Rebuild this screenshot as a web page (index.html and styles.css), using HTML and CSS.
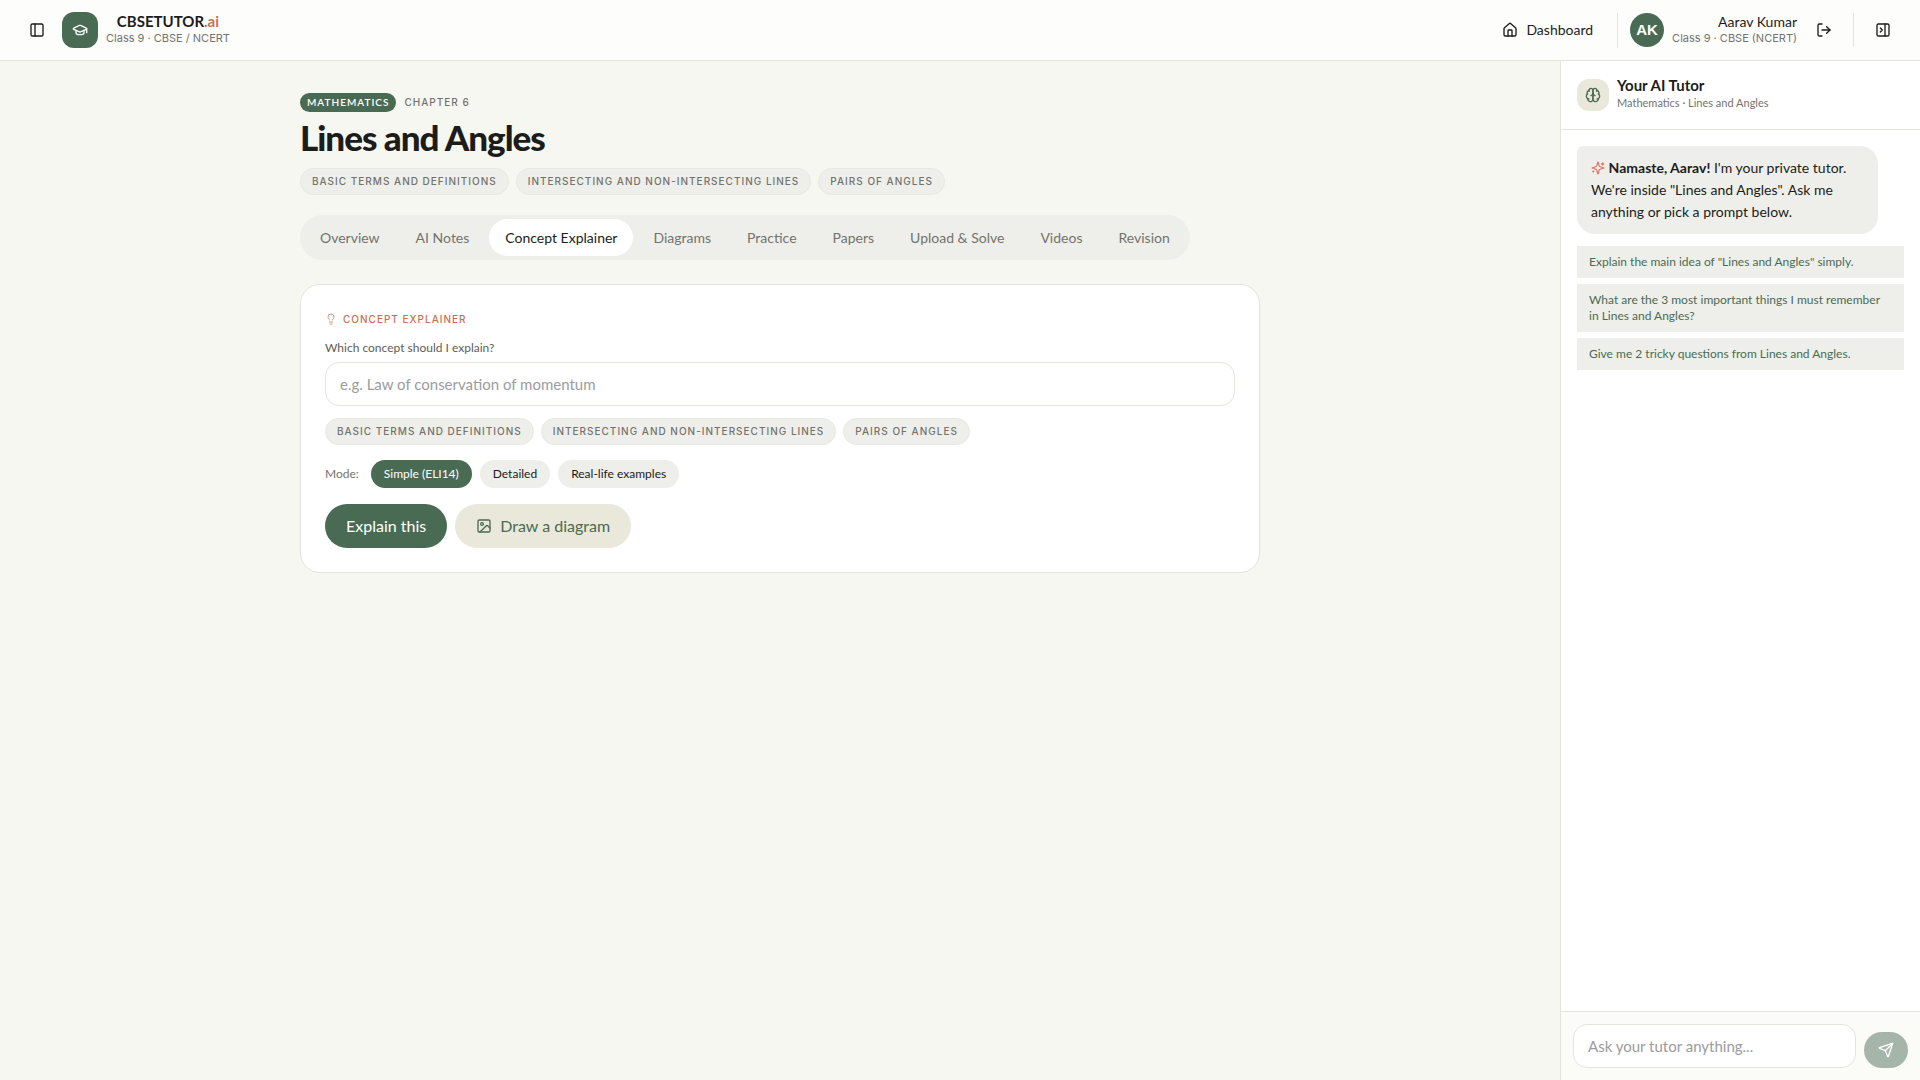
FILE: index.html
```html
<!DOCTYPE html>
<html lang="en">
<head>
<meta charset="utf-8">
<meta name="viewport" content="width=device-width, initial-scale=1">
<title>Lines and Angles · CBSETUTOR.ai</title>
<link rel="stylesheet" href="styles.css">
</head>
<body>
<div class="app">
  <header class="topbar">
    <div class="topbar-group">
      <button class="icon-button" type="button" aria-label="Toggle chapters">
        <svg class="icon" viewBox="0 0 24 24"><rect x="3" y="3" width="18" height="18" rx="2"/><path d="M9 3v18"/></svg>
      </button>
      <a class="brand" href="#">
        <span class="brand-mark">
          <svg class="icon" viewBox="0 0 24 24"><path d="M21.42 10.922a1 1 0 0 0-.019-1.838L12.83 5.18a2 2 0 0 0-1.66 0L2.6 9.08a1 1 0 0 0 0 1.832l8.57 3.908a2 2 0 0 0 1.66 0z"/><path d="M22 10v6"/><path d="M6 12.5V16a6 3 0 0 0 12 0v-3.5"/></svg>
        </span>
        <span class="brand-text">
          <span class="brand-name">CBSETUTOR<span class="brand-tld">.ai</span></span>
          <span class="meta meta-wide">Class 9 · CBSE / NCERT</span>
        </span>
      </a>
    </div>
    <div class="topbar-group topbar-right">
      <a class="nav-link" href="#">
        <svg class="icon" viewBox="0 0 24 24"><path d="M15 21v-8a1 1 0 0 0-1-1h-4a1 1 0 0 0-1 1v8"/><path d="M3 10a2 2 0 0 1 .709-1.528l7-5.999a2 2 0 0 1 2.582 0l7 5.999A2 2 0 0 1 21 10v9a2 2 0 0 1-2 2H5a2 2 0 0 1-2-2z"/></svg>
        Dashboard
      </a>
      <div class="account">
        <span class="avatar">AK</span>
        <div class="account-text">
          <span class="account-name">Aarav Kumar</span>
          <span class="meta meta-wide">Class 9 · CBSE (NCERT)</span>
        </div>
        <button class="icon-button" type="button" aria-label="Log out">
          <svg class="icon" viewBox="0 0 24 24"><path d="M9 21H5a2 2 0 0 1-2-2V5a2 2 0 0 1 2-2h4"/><path d="m16 17 5-5-5-5"/><path d="M21 12H9"/></svg>
        </button>
      </div>
      <div class="panel-toggle">
        <button class="icon-button" type="button" aria-label="Close tutor panel">
          <svg class="icon" viewBox="0 0 24 24"><rect x="3" y="3" width="18" height="18" rx="2"/><path d="M15 3v18"/><path d="m8 9 3 3-3 3"/></svg>
        </button>
      </div>
    </div>
  </header>

  <div class="workspace">
    <main class="main">
      <div class="content">
        <div class="chapter-line">
          <span class="subject">Mathematics</span>
          <span class="chapter">Chapter 6</span>
        </div>
        <h1 class="title">Lines and Angles</h1>
        <ul class="chips">
          <li class="chip">Basic terms and definitions</li>
          <li class="chip">Intersecting and non-intersecting lines</li>
          <li class="chip">Pairs of angles</li>
        </ul>
        <nav class="tabs" aria-label="Chapter tools">
          <button class="tab" type="button">Overview</button>
          <button class="tab" type="button">AI Notes</button>
          <button class="tab tab-active" type="button" aria-current="page">Concept Explainer</button>
          <button class="tab" type="button">Diagrams</button>
          <button class="tab" type="button">Practice</button>
          <button class="tab" type="button">Papers</button>
          <button class="tab" type="button">Upload &amp; Solve</button>
          <button class="tab" type="button">Videos</button>
          <button class="tab" type="button">Revision</button>
        </nav>

        <section class="card">
          <h2 class="card-title">
            <svg class="icon icon-small" viewBox="0 0 24 24"><path d="M15 14c.2-1 .7-1.7 1.5-2.5 1-.9 1.5-2.2 1.5-3.5A6 6 0 0 0 6 8c0 1 .2 2.2 1.5 3.5.7.7 1.3 1.5 1.5 2.5"/><path d="M9 18h6"/><path d="M10 22h4"/></svg>
            Concept Explainer
          </h2>
          <label class="field-label" for="concept">Which concept should I explain?</label>
          <input class="text-input" id="concept" type="text" placeholder="e.g. Law of conservation of momentum">
          <div class="chips card-chips">
            <button class="chip" type="button">Basic terms and definitions</button>
            <button class="chip" type="button">Intersecting and non-intersecting lines</button>
            <button class="chip" type="button">Pairs of angles</button>
          </div>
          <div class="modes">
            <span class="modes-label">Mode:</span>
            <button class="mode mode-active" type="button">Simple (ELI14)</button>
            <button class="mode" type="button">Detailed</button>
            <button class="mode" type="button">Real-life examples</button>
          </div>
          <div class="actions">
            <button class="action action-primary" type="button">Explain this</button>
            <button class="action action-secondary" type="button">
              <svg class="icon" viewBox="0 0 24 24"><rect x="3" y="3" width="18" height="18" rx="2"/><circle cx="9" cy="9" r="2"/><path d="m21 15-3.086-3.086a2 2 0 0 0-2.828 0L6 21"/></svg>
              Draw a diagram
            </button>
          </div>
        </section>
      </div>
    </main>

    <aside class="tutor">
      <div class="tutor-head">
        <span class="tutor-mark">
          <svg class="icon" viewBox="0 0 24 24"><path d="M12 5a3 3 0 1 0-5.997.125 4 4 0 0 0-2.526 5.77 4 4 0 0 0 .556 6.588A4 4 0 1 0 12 18Z"/><path d="M12 5a3 3 0 1 1 5.997.125 4 4 0 0 1 2.526 5.77 4 4 0 0 1-.556 6.588A4 4 0 1 1 12 18Z"/><path d="M15 13a4.5 4.5 0 0 1-3-4 4.5 4.5 0 0 1-3 4"/><path d="M17.599 6.5a3 3 0 0 0 .399-1.375"/><path d="M6.003 5.125A3 3 0 0 0 6.401 6.5"/><path d="M3.477 10.896a4 4 0 0 1 .585-.396"/><path d="M19.938 10.5a4 4 0 0 1 .585.396"/><path d="M6 18a4 4 0 0 1-1.967-.516"/><path d="M19.967 17.484A4 4 0 0 1 18 18"/></svg>
        </span>
        <div class="tutor-heading">
          <h2 class="tutor-title">Your AI Tutor</h2>
          <p class="meta">Mathematics · Lines and Angles</p>
        </div>
      </div>
      <div class="messages">
        <p class="bubble"><svg class="icon icon-spark" viewBox="0 0 24 24"><path d="M9.937 15.5A2 2 0 0 0 8.5 14.063l-6.135-1.582a.5.5 0 0 1 0-.962L8.5 9.936A2 2 0 0 0 9.937 8.5l1.582-6.135a.5.5 0 0 1 .963 0L14.063 8.5A2 2 0 0 0 15.5 9.937l6.135 1.581a.5.5 0 0 1 0 .964L15.5 14.063a2 2 0 0 0-1.437 1.437l-1.582 6.135a.5.5 0 0 1-.963 0z"/><path d="M20 3v4"/><path d="M22 5h-4"/><path d="M4 17v2"/><path d="M5 18H3"/></svg> <strong>Namaste, Aarav!</strong> I'm your private tutor. We're inside "Lines and Angles". Ask me anything or pick a prompt below.</p>
        <div class="prompts">
          <button class="prompt" type="button">Explain the main idea of "Lines and Angles" simply.</button>
          <button class="prompt" type="button">What are the 3 most important things I must remember in Lines and Angles?</button>
          <button class="prompt" type="button">Give me 2 tricky questions from Lines and Angles.</button>
        </div>
      </div>
      <form class="composer">
        <input class="text-input" type="text" aria-label="Ask your tutor" placeholder="Ask your tutor anything...">
        <button class="send" type="button" aria-label="Send" disabled>
          <svg class="icon" viewBox="0 0 24 24"><path d="M14.536 21.686a.5.5 0 0 0 .937-.024l6.5-19a.496.496 0 0 0-.635-.635l-19 6.5a.5.5 0 0 0-.024.937l7.93 3.18a2 2 0 0 1 1.112 1.11z"/><path d="m21.854 2.147-10.94 10.939"/></svg>
        </button>
      </form>
    </aside>
  </div>
</div>
</body>
</html>
```

FILE: styles.css
```css
:root {
  --green: #4a6b53;
  --ink: #1c1c1a;
  --muted: #73736e;
  --line: #e4e4df;
  --soft: #eeefea;
  --page: #f7f7f2;
  --sand: #e9e8da;
  --rust: #c96f4f;
  --text-font: Lato, sans-serif;
  --label-font: Inter, sans-serif;
}

* {
  box-sizing: border-box;
}

body {
  margin: 0;
  background: var(--page);
  color: var(--ink);
  font-family: var(--text-font);
  font-size: 14px;
  line-height: 20px;
}

button,
input {
  margin: 0;
  border: 0;
  color: inherit;
  font: inherit;
}

button {
  cursor: pointer;
}

h1,
h2,
p,
ul {
  margin: 0;
  padding: 0;
}

a {
  color: inherit;
  text-decoration: none;
}

.icon {
  flex: none;
  width: 16px;
  height: 16px;
  fill: none;
  stroke: currentColor;
  stroke-width: 2;
  stroke-linecap: round;
  stroke-linejoin: round;
}

.icon-small {
  width: 12px;
  height: 12px;
  stroke-width: 1.5;
}

.app {
  display: flex;
  flex-direction: column;
  min-height: 100vh;
}

/* Top bar */
.topbar {
  display: flex;
  justify-content: space-between;
  align-items: center;
  min-height: 61px;
  padding: 0 20px;
  border-bottom: 1px solid var(--line);
  background: #fdfdfc;
}

.topbar-group {
  display: flex;
  align-items: center;
  gap: 8px;
}

.topbar-right {
  gap: 12px;
}

.icon-button {
  display: grid;
  place-items: center;
  width: 34px;
  height: 34px;
  padding: 0;
  border-radius: 17px;
  background: transparent;
}

.brand {
  display: flex;
  align-items: center;
  gap: 8px;
}

.brand-mark {
  display: grid;
  place-items: center;
  width: 36px;
  height: 36px;
  border-radius: 12px;
  background: var(--green);
  color: #fff;
}

.brand-text {
  display: flex;
  flex-direction: column;
  align-items: center;
  padding-bottom: 2px;
}

.brand-name {
  font-size: 15px;
  font-weight: 700;
  line-height: 17px;
}

.brand-tld {
  color: var(--rust);
}

.meta {
  color: var(--muted);
  font-size: 11px;
  line-height: 16px;
}

.meta-wide {
  font-family: var(--label-font);
}

.nav-link {
  display: flex;
  align-items: center;
  gap: 8px;
  padding: 8px 12px;
}

.account,
.panel-toggle {
  display: flex;
  align-items: center;
  gap: 8px;
  min-height: 32px;
  padding-left: 12px;
  border-left: 1px solid var(--line);
}

.avatar {
  display: grid;
  place-items: center;
  width: 34px;
  height: 34px;
  border-radius: 50%;
  background: var(--green);
  color: #fff;
  font-family: "Liberation Sans", sans-serif;
  font-size: 15px;
  font-weight: 700;
}

.account-text {
  display: flex;
  flex-direction: column;
  align-items: flex-end;
  padding: 0 2px 2px 0;
}

.account-name {
  line-height: 17px;
}

/* Two-column workspace */
.workspace {
  flex: 1;
  display: grid;
  grid-template-columns: minmax(0, 1fr) 360px;
}

.main {
  padding: 32px 24px;
}

.content {
  max-width: 960px;
  margin: 0 auto;
}

.chapter-line {
  display: flex;
  gap: 8px;
  align-items: flex-start;
  font-family: var(--label-font);
  font-size: 10px;
  font-weight: 500;
  letter-spacing: 1px;
  line-height: 18px;
  text-transform: uppercase;
}

.subject {
  padding: 0 7px;
  border-radius: 10px;
  background: var(--green);
  color: #fff;
  font-family: var(--text-font);
  font-weight: 600;
  line-height: 19px;
}

.chapter {
  color: var(--muted);
}

.title {
  margin: 5px 0 11px;
  font-size: 35px;
  font-weight: 900;
  letter-spacing: -1px;
  line-height: 40px;
}

.chips {
  display: flex;
  flex-wrap: wrap;
  gap: 7px;
  list-style: none;
}

.chip {
  padding: 4px 11px;
  border: 1px solid #e8e8e2;
  border-radius: 14px;
  background: var(--soft);
  color: var(--muted);
  font-family: var(--label-font);
  font-size: 10px;
  font-weight: 500;
  letter-spacing: 1px;
  line-height: 17px;
  text-transform: uppercase;
}

.tabs {
  display: inline-flex;
  flex-wrap: wrap;
  gap: 4px;
  margin: 20px 0 24px;
  padding: 4px;
  border-radius: 23px;
  background: var(--soft);
}

.tab {
  padding: 8px 16px;
  border-radius: 19px;
  background: transparent;
  color: var(--muted);
  line-height: 21px;
}

.tab-active {
  background: #fff;
  color: var(--ink);
}

.card {
  padding: 24px;
  border: 1px solid var(--line);
  border-radius: 20px;
  background: #fff;
}

.card-title {
  display: flex;
  align-items: center;
  gap: 6px;
  color: var(--rust);
  font-family: var(--label-font);
  font-size: 10px;
  font-weight: 500;
  letter-spacing: 1px;
  line-height: 20px;
  text-transform: uppercase;
}

.field-label {
  display: block;
  margin: 11px 0 6px;
  color: #5d5d58;
  font-size: 12px;
  line-height: 16px;
}

.text-input {
  width: 100%;
  min-width: 0;
  height: 44px;
  padding: 0 14px;
  border: 1px solid var(--line);
  border-radius: 14px;
  background: #fff;
  font-size: 15px;
}

.text-input::placeholder {
  color: #9b9ba0;
  opacity: 1;
}

.card-chips {
  margin-top: 12px;
}

.modes {
  display: flex;
  align-items: center;
  gap: 8px;
  margin: 15px 0 16px;
  font-size: 12px;
}

.modes-label {
  margin-right: 4px;
  color: var(--muted);
}

.mode {
  padding: 4px 13px;
  border-radius: 14px;
  background: var(--soft);
}

.mode-active {
  background: var(--green);
  color: #fff;
}

.actions {
  display: flex;
  gap: 8px;
}

.action {
  display: flex;
  align-items: center;
  gap: 8px;
  padding: 10px 21px;
  border-radius: 22px;
  font-size: 16px;
  line-height: 24px;
}

.action-primary {
  background: var(--green);
  color: #fff;
}

.action-secondary {
  background: var(--sand);
  color: var(--green);
}

/* Tutor panel */
.tutor {
  display: flex;
  flex-direction: column;
  border-left: 1px solid var(--line);
  background: #fff;
}

.tutor-head {
  display: flex;
  align-items: center;
  gap: 8px;
  padding: 14px 16px;
  border-bottom: 1px solid var(--line);
}

.tutor-mark {
  display: grid;
  place-items: center;
  width: 32px;
  height: 32px;
  border-radius: 12px;
  background: var(--sand);
  color: var(--green);
}

.tutor-heading {
  padding-bottom: 4px;
}

.tutor-title {
  font-size: 15px;
  font-weight: 700;
  line-height: 20px;
}

.messages {
  flex: 1;
  display: flex;
  flex-direction: column;
  align-items: flex-start;
  gap: 12px;
  padding: 16px;
}

.bubble {
  max-width: 92%;
  padding: 11px 14px;
  border-radius: 6px 18px 18px 18px;
  background: var(--soft);
  line-height: 22px;
}

.icon-spark {
  width: 14px;
  height: 14px;
  color: #e07060;
  vertical-align: -2px;
}

.prompts {
  display: flex;
  flex-direction: column;
  align-self: stretch;
  gap: 6px;
}

.prompt {
  padding: 8px 12px;
  background: var(--soft);
  color: var(--green);
  font-size: 12px;
  line-height: 16px;
  text-align: left;
}

.composer {
  display: flex;
  align-items: flex-end;
  gap: 8px;
  padding: 12px;
  border-top: 1px solid var(--line);
  background: #fbfbf8;
}

.send {
  display: grid;
  flex: none;
  place-items: center;
  width: 44px;
  height: 36px;
  padding: 0;
  border-radius: 18px;
  background: #a5b5a9;
  color: #fff;
}
```
